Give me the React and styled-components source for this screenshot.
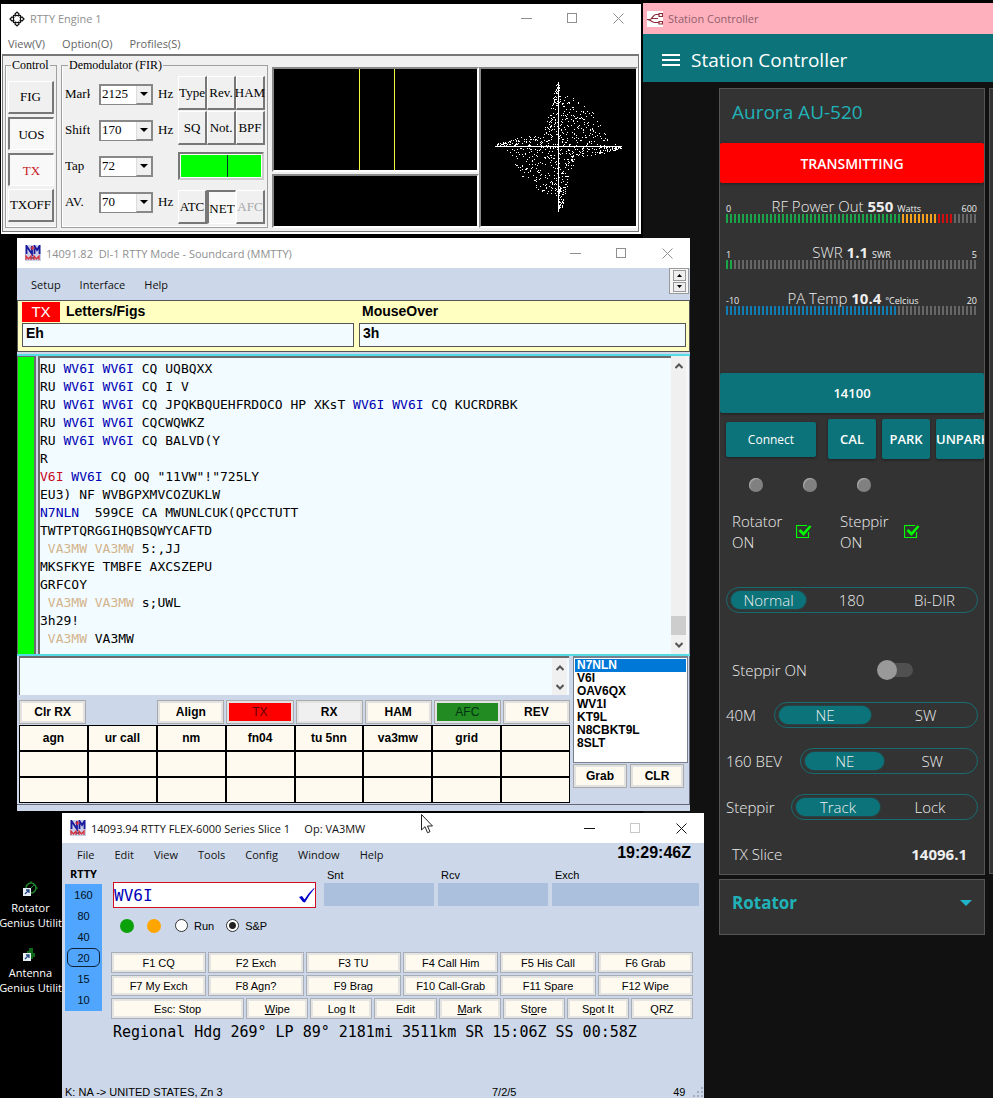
import React from "react";
import styled, { createGlobalStyle, css } from "styled-components";

const ui = `"Open Sans", "Noto Sans", sans-serif`;
const arial = `"Liberation Sans", Arial, sans-serif`;
const times = `"Liberation Serif", "Times New Roman", serif`;
const mono = `"DejaVu Sans Mono", "Liberation Mono", monospace`;

const GlobalStyle = createGlobalStyle`
  *, *::before, *::after { box-sizing: border-box; }
  body { margin: 0; background: #000; }
  button, input, select, textarea { font: inherit; color: inherit; margin: 0; padding: 0; border: 0; border-radius: 0; background: none; }
  fieldset { min-width: 0; margin: 0; }
`;

const Desktop = styled.main`
  position: relative;
  min-height: 100vh;
  overflow: hidden;
  background: #000;
  font-family: ${ui};
  font-size: 12px;
  color: #000;
`;

/* ---------- shared window chrome ---------- */

const Win = styled.section`
  position: absolute;
  left: ${(p) => p.$left}px;
  right: ${(p) => p.$right}px;
  top: ${(p) => p.$top}px;
  background: ${(p) => p.$bg};
  display: flex;
  flex-direction: column;
`;

const TitleBar = styled.header`
  display: flex;
  align-items: center;
  height: ${(p) => p.$h || 30}px;
  flex: none;
  padding-left: ${(p) => p.$pad || 8}px;
  gap: 5px;
  background: ${(p) => p.$bg || "#fff"};
  color: ${(p) => (p.$active ? "#111" : "#8f8f8f")};
  font-family: ${ui};
  font-size: 11px;
  white-space: pre;
`;

const TitleText = styled.span`
  flex: 1;
  min-width: 0;
`;

const CaptionGroup = styled.div`
  display: flex;
`;

const CaptionButton = styled.button`
  width: 46px;
  height: 28px;
  display: grid;
  place-items: center;
  color: ${(p) => (p.$dim ? "#c8c8c8" : "inherit")};
`;

const MenuBar = styled.nav`
  display: flex;
  flex: none;
  align-items: center;
  gap: ${(p) => p.$gap}px;
  height: ${(p) => p.$h}px;
  padding-left: ${(p) => p.$pad}px;
  color: ${(p) => p.$color || "#111"};
  font-size: 11px;
`;

const MenuItem = styled.button`
  white-space: nowrap;
`;

function Captions({ dimMax }) {
  return (
    <CaptionGroup>
      <CaptionButton aria-label="Minimize">
        <svg width="11" height="11"><path d="M0 5.5H11" stroke="currentColor" /></svg>
      </CaptionButton>
      <CaptionButton aria-label="Maximize" $dim={dimMax}>
        <svg width="11" height="11"><rect x=".5" y=".5" width="9" height="9" fill="none" stroke="currentColor" /></svg>
      </CaptionButton>
      <CaptionButton aria-label="Close">
        <svg width="11" height="11"><path d="M.5 .5l10 10M10.5 .5l-10 10" stroke="currentColor" /></svg>
      </CaptionButton>
    </CaptionGroup>
  );
}

function LoggerIcon() {
  return (
    <svg width="16" height="16" viewBox="0 0 16 16">
      <rect width="16" height="16" fill="#c9cfe6" />
      <path d="M1.5 9V1L7 9V1" fill="none" stroke="#1a1a9c" strokeWidth="1.8" />
      <path d="M9.5 9V1l2.5 4L14.5 1v8" fill="none" stroke="#1a1a9c" strokeWidth="1.8" />
      <path d="M5 3h5M7.5 1v4" stroke="#e0303a" strokeWidth="1.2" />
      <path d="M1 15v-4l2.500 3L6 11v4M9 15v-4l2.500 3 2.500-3v4" fill="none" stroke="#d8303a" strokeWidth="1.3" />
      <path d="M6 13h3" stroke="#8a3050" strokeWidth="1.5" />
    </svg>
  );
}

/* ---------- RTTY Engine ---------- */

const EngineBody = styled.div`
  display: flex;
  gap: 4px;
  margin: 0 2px 2px 1px;
  padding: 2px 0 3px 2px;
  border: 1px solid #777;
  border-top-width: 2px;
  background: #f0f0f0;
  font-family: ${times};
  font-size: 12px;
`;

const Group = styled.fieldset`
  border: 1px solid #a0a0a0;
  box-shadow: inset 1px -1px 0 #fff;
  padding: ${(p) => p.$pad};
  display: flex;
  height: 170px;
  legend {
    margin-left: 3px;
    padding: 0 1px;
    line-height: 14px;
    white-space: nowrap;
  }
`;

const ControlKeys = styled.div`
  display: grid;
  grid-template-rows: repeat(4, 33px);
  width: 46px;
  gap: 3px;
`;

const KeyRow = styled.div`
  display: grid;
  grid-template-columns: repeat(3, 29px);
  height: 34px;
`;

const Key = styled.button`
  min-width: 0;
  white-space: nowrap;
  font-size: 13px;
  display: flex;
  align-items: center;
  justify-content: center;
  border: 1px solid;
  border-color: #fff #777 #777 #fff;
  border-right-width: 2px;
  border-bottom-width: 2px;
  color: ${(p) => p.$color || "#000"};
  ${(p) => p.$down && css`
    background: #f8f8f8;
    border-color: #777 #fff #fff #777;
    border-width: 2px 1px 1px 2px;
    padding-top: 2px;
  `}
`;

const Params = styled.div`
  width: 113px;
  flex: none;
`;

const ParamRow = styled.div`
  display: grid;
  grid-template-columns: 34px 54px 1fr;
  align-items: center;
  height: 36px;
  label { overflow: hidden; width: 25px; font-size: 13px; white-space: nowrap; }
`;

const Combo = styled.span`
  position: relative;
  display: block;
  height: 21px;
  background: #fff;
  border: 1px solid #888;
  border-width: 2px 1px 1px 2px;
  select {
    display: block;
    appearance: none;
    width: 100%;
    height: 15px;
    padding-left: 1px;
    font-size: 13px;
    line-height: 15px;
  }
`;

const ComboArrow = styled.span`
  position: absolute;
  right: 0;
  top: 0;
  width: 16px;
  height: 18px;
  display: grid;
  place-items: center;
  background: #f0f0f0;
  border: 1px solid #888;
  border-top: 0;
  border-left-color: #ddd;
  pointer-events: none;
`;

const Unit = styled.span`
  padding-left: 5px;
  font-size: 13px;
`;

const KeyPad = styled.div`
  display: flex;
  flex-direction: column;
  gap: 1px;
`;

const LevelBox = styled.div`
  margin: 6px 1px 9px 0;
  height: 28px;
  padding: 1px;
  border: 2px solid;
  border-color: #777 #ccc #ccc #777;
  background: #fff;
`;

const Level = styled.div`
  height: 100%;
  background: linear-gradient(#033, #033) 58% 0 / 1px 100% no-repeat #0f0;
`;

const ScopeStack = styled.div`
  flex: 1;
  margin-top: 9px;
  display: flex;
  flex-direction: column;
  gap: 2px;
`;

const Scopes = styled.div`
  flex: 1;
  display: flex;
`;

const Scope = styled.div`
  flex: ${(p) => p.$flex};
  min-height: 0;
  min-width: 0;
  background: #000;
  border: 2px solid;
  border-color: #888 #fff #fff #888;
  svg { display: block; }
`;

const XYScope = styled(Scope)`
  flex: none;
  width: 159px;
  margin-top: 9px;
`;

const UPPER = [[0, 0], [0, -52], [14, -48], [34, -34], [45, -20], [50, -5], [62, 0]];
const NARROW = [[0, 0], [0, -64], [-6, -50], [-12, -26], [-17, -11], [-40, -9], [-64, -2]];

function inside(poly, x, y) {
  let hit = false;
  for (let i = 0, j = poly.length - 1; i < poly.length; j = i++) {
    const [xi, yi] = poly[i];
    const [xj, yj] = poly[j];
    if (yi > y !== yj > y && x < ((xj - xi) * (y - yi)) / (yj - yi) + xi) hit = !hit;
  }
  return hit;
}

function scatterPath() {
  let seed = 4217;
  const rnd = () => {
    seed = (seed * 1103515245 + 12345) % 2147483648;
    return seed / 2147483648;
  };
  const dot = (x, y) => `M${78 + Math.round(x)} ${77 + Math.round(y)}h1v1h-1z`;
  const out = [];
  [1, -1].forEach((s) => {
    const add = (poly, count) => {
      let n = 0;
      while (n < count) {
        const x = rnd() * 130 - 65;
        const y = -rnd() * 65;
        if (inside(poly, x, y)) {
          out.push(dot(s * x, s * y));
          n += 1;
        }
      }
    };
    add(UPPER, 185);
    add(NARROW, 130);
    for (let i = 0; i < 45; i++) {
      const t = 40 + rnd() * 22;
      out.push(dot(-s * t, -s * rnd() * 6 * (1.2 - (t - 40) / 30)));
      out.push(dot(-s * rnd() * 6 * (1.2 - (t - 40) / 30), -s * t));
    }
  });
  return out.join("");
}

const SCATTER = scatterPath();

const PARAMS = [
  ["Mark", "2125", "Hz"],
  ["Shift", "170", "Hz"],
  ["Tap", "72", ""],
  ["AV.", "70", "Hz"],
];

function Engine() {
  return (
    <Win $left={1} $right={352} $top={4} $bg="#fff" aria-label="RTTY Engine 1">
      <TitleBar $h={29}>
        <svg width="16" height="16" viewBox="0 0 16 16" fill="none" stroke="#111" strokeWidth="1.2">
          <rect x="4.5" y="4.5" width="7" height="7" />
          <path d="M5.500 3.500L8 1l2.500 2.500M5.500 12.500L8 15l2.500-2.500M3.500 5.500L1 8l2.500 2.500M12.500 5.500L15 8l-2.500 2.500M6.500 3.500v9M9.500 3.500v9M3.500 6.500h9M3.500 9.500h9" />
          <rect x="5.5" y="5.5" width="5" height="5" fill="#fff" stroke="none" />
        </svg>
        <TitleText>RTTY Engine 1</TitleText>
        <Captions />
      </TitleBar>
      <MenuBar $gap={17} $h={21} $pad={7} $color="#666">
        <MenuItem>View(V)</MenuItem>
        <MenuItem>Option(O)</MenuItem>
        <MenuItem>Profiles(S)</MenuItem>
      </MenuBar>
      <EngineBody>
        <Group $pad="9px 2px 3px">
          <legend>Control</legend>
          <ControlKeys>
            <Key>FIG</Key>
            <Key $down>UOS</Key>
            <Key $down $color="#c8141e">TX</Key>
            <Key>TXOFF</Key>
          </ControlKeys>
        </Group>
        <Group $pad="4px 2px 3px 3px">
          <legend>Demodulator (FIR)</legend>
          <Params>
            {PARAMS.map(([name, value, unit]) => (
              <ParamRow key={name}>
                <label htmlFor={"p-" + name}>{name}</label>
                <Combo>
                  <select id={"p-" + name} defaultValue={value}>
                    <option>{value}</option>
                  </select>
                  <ComboArrow>
                    <svg width="8" height="4"><path d="M0 0h8L4 4z" /></svg>
                  </ComboArrow>
                </Combo>
                <Unit>{unit}</Unit>
              </ParamRow>
            ))}
          </Params>
          <KeyPad>
            <KeyRow><Key>Type</Key><Key>Rev.</Key><Key>HAM</Key></KeyRow>
            <KeyRow><Key>SQ</Key><Key>Not.</Key><Key>BPF</Key></KeyRow>
            <LevelBox><Level /></LevelBox>
            <KeyRow><Key>ATC</Key><Key $down>NET</Key><Key $color="#a8a8a8">AFC</Key></KeyRow>
          </KeyPad>
        </Group>
        <Scopes>
          <ScopeStack>
            <Scope $flex="2 1 0">
              <svg width="100%" height="100%" shapeRendering="crispEdges">
                <rect x="42%" width="1" height="100%" fill="#f0f83c" />
                <rect x="59%" width="1" height="100%" fill="#f0f83c" />
              </svg>
            </Scope>
            <Scope $flex="1 1 0" />
          </ScopeStack>
          <XYScope>
            <svg width="155" height="156" viewBox="0 0 155 156" shapeRendering="crispEdges">
              <path d={SCATTER} fill="#fff" />
              <path d="M14 77h127v1H14zM77 13h1v130h-1z" fill="#fff" />
            </svg>
          </XYScope>
        </Scopes>
      </EngineBody>
    </Win>
  );
}

/* ---------- MMTTY decode window ---------- */

const PALE = "#f2fbff";
const FRAME = "#ccd8e9";
const CREAM = "#fefaf0";

const MenuStrip = styled.div`
  display: flex;
  justify-content: space-between;
  height: 32px;
  padding-right: 1px;
`;

const SpinBox = styled.div`
  display: flex;
  flex-direction: column;
  gap: 1px;
  width: 20px;
  height: 26px;
  padding: 1px 2px 1px 3px;
  background: #f6f6f6;
  border: 1px solid #9a9a9a;
  button {
    flex: 1;
    display: grid;
    place-items: center;
    border: 1px solid #999;
    background: #eee;
  }
`;

const FigsPanel = styled.div`
  display: grid;
  grid-template-columns: 332fr 327fr;
  column-gap: 5px;
  height: 52px;
  padding: 1px 3px 0 4px;
  border: 1px solid #555;
  background: #ffffc2;
  font-family: ${arial};
  font-size: 14px;
  font-weight: bold;
`;

const FigsField = styled.div`
  min-width: 0;
  label {
    display: inline-block;
    height: 20px;
    line-height: 18px;
    padding-left: ${(p) => (p.$flush ? 3 : 6)}px;
    vertical-align: top;
  }
  input {
    display: block;
    width: 100%;
    height: 24px;
    margin-top: 1px;
    padding: 0 3px 4px;
    border: 1px solid #555;
    background: ${PALE};
    font-weight: bold;
  }
`;

const TxFlag = styled.span`
  display: inline-block;
  width: 38px;
  height: 20px;
  line-height: 20px;
  background: #f00;
  color: #fff;
  font-size: 15px;
  font-weight: normal;
  text-align: center;
  vertical-align: top;
`;

const RxArea = styled.div`
  display: flex;
  height: 302px;
  margin-top: 2px;
  border-top: 2px solid #55dbe6;
  border-bottom: 2px solid #55dbe6;
`;

const TuneBar = styled.div`
  width: 19px;
  margin-right: 2px;
  background: #0f0;
  border: 1px solid #6b6b6b;
  border-width: 1px 2px 0 1px;
`;

const RxText = styled.pre`
  flex: 1;
  min-width: 0;
  margin: 0;
  padding: 2px 0 0;
  overflow: hidden;
  border: 1px solid #6b6b6b;
  border-width: 2px 0 0 2px;
  background: ${PALE};
  font-family: ${mono};
  font-size: 13px;
  line-height: 18px;
`;

const Call = styled.span`
  color: ${(p) => p.$c};
`;

const ScrollBar = styled.div`
  display: flex;
  flex-direction: column;
  width: 15px;
  flex: none;
  background: #f0f0f0;
  button { height: 19px; display: grid; place-items: center; flex: none; }
`;

const Thumb = styled.span`
  height: 19px;
  margin-top: auto;
  background: #cdcdcd;
`;

const RxEdge = styled.div`
  width: 4px;
  background: #f6f6f6;
  border-right: 1px solid #8792a5;
`;

const Bottom = styled.div`
  display: flex;
  gap: 3px;
  height: 149px;
  padding: 0 1px 0 2px;
  border-right: 1px solid #667;
  border-bottom: 1px solid #667;
`;

const SendSide = styled.div`
  flex: 1;
  min-width: 0;
`;

const SendBox = styled.div`
  display: flex;
  height: 39px;
  margin-right: 1px;
  padding-right: 2px;
  border: 1px solid #6b6b6b;
  border-width: 2px 0 0 1px;
  background: ${PALE};
  textarea { flex: 1; min-width: 0; resize: none; outline: 0; }
`;

const Mini = styled.button`
  border: 1px solid #aaa;
  outline: 2px solid #e2e2e2;
  outline-offset: -3px;
  height: 24px;
  background: ${(p) => p.$bg || CREAM};
  color: ${(p) => p.$color || "#000"};
  font-family: ${arial};
  font-size: 12px;
  font-weight: ${(p) => (p.$plain ? "normal" : "bold")};
  ${(p) => p.$wide && css`width: 54px;`}
`;

const ModeRow = styled.div`
  display: grid;
  grid-template-columns: repeat(8, 1fr);
  column-gap: 2px;
  padding-top: 5px;
  height: 30px;
`;

const MacroGrid = styled.div`
  display: grid;
  grid-template-columns: repeat(8, 1fr);
  grid-auto-rows: 24px;
  gap: 2px;
  padding: 1px;
  background: #000;
`;

const Macro = styled.button`
  padding-bottom: 1px;
  background: ${CREAM};
  font-family: ${arial};
  font-size: 12px;
  font-weight: bold;
`;

const ListSide = styled.div`
  width: 115px;
  flex: none;
`;

const CallList = styled.ul`
  list-style: none;
  height: 107px;
  margin: 0 0 1px;
  padding: 1px 1px 0;
  background: #fff;
  border: 1px solid #777f8c;
  border-top-width: 2px;
  font-family: ${arial};
  font-size: 12px;
  font-weight: bold;
  line-height: 13px;
`;

const CallItem = styled.li`
  padding-left: 2px;
  ${(p) => p.$on && css`background: #0078d7; color: #fff;`}
`;

const PairRow = styled.div`
  display: flex;
  gap: 3px;
`;

const WinFoot = styled.div`
  height: 6px;
`;

const Up = () => (
  <svg width="8" height="6"><path d="M.5 5L4 1.500 7.500 5" fill="none" stroke="#555" strokeWidth="2" /></svg>
);
const Down = () => (
  <svg width="8" height="6"><path d="M.5 1L4 4.500 7.500 1" fill="none" stroke="#555" strokeWidth="2" /></svg>
);

const B = ({ children }) => <Call $c="#0000b4">{children}</Call>;
const T = ({ children }) => <Call $c="#d2b48c">{children}</Call>;

const MODES = [
  { t: "Clr RX" },
  null,
  { t: "Align" },
  { t: "TX", bg: "#f00", color: "#600", plain: true },
  { t: "RX", bg: "#f0f0f0" },
  { t: "HAM" },
  { t: "AFC", bg: "#228b22", color: "#031", plain: true },
  { t: "REV" },
];
const MACROS = ["agn", "ur call", "nm", "fn04", "tu 5nn", "va3mw", "grid"].concat(Array(17).fill(""));
const CALLS = ["N7NLN", "V6I", "OAV6QX", "WV1I", "KT9L", "N8CBKT9L", "8SLT"];

function DecodeWindow() {
  return (
    <Win $left={17} $right={303} $top={238} $bg={FRAME} aria-label="RTTY decode">
      <TitleBar>
        <LoggerIcon />
        <TitleText>14091.82  DI-1 RTTY Mode - Soundcard (MMTTY)</TitleText>
        <Captions />
      </TitleBar>
      <MenuStrip>
        <MenuBar $gap={19} $h={32} $pad={14}>
          <MenuItem>Setup</MenuItem>
          <MenuItem>Interface</MenuItem>
          <MenuItem>Help</MenuItem>
        </MenuBar>
        <SpinBox>
          <button aria-label="Up"><svg width="5" height="3"><path d="M0 3h5L2.500 0z" /></svg></button>
          <button aria-label="Down"><svg width="5" height="3"><path d="M0 0h5L2.500 3z" /></svg></button>
        </SpinBox>
      </MenuStrip>
      <FigsPanel>
        <FigsField>
          <TxFlag>TX</TxFlag>
          <label htmlFor="figs">Letters/Figs</label>
          <input id="figs" defaultValue="Eh" />
        </FigsField>
        <FigsField $flush>
          <label htmlFor="over">MouseOver</label>
          <input id="over" defaultValue="3h" />
        </FigsField>
      </FigsPanel>
      <RxArea>
        <TuneBar />
        <RxText>
          RU <B>WV6I WV6I</B> CQ UQBQXX{"\n"}
          RU <B>WV6I WV6I</B> CQ I V{"\n"}
          RU <B>WV6I WV6I</B> CQ JPQKBQUEHFRDOCO HP XKsT <B>WV6I WV6I</B> CQ KUCRDRBK{"\n"}
          RU <B>WV6I WV6I</B> CQCWQWKZ{"\n"}
          RU <B>WV6I WV6I</B> CQ BALVD(Y{"\n"}
          R{"\n"}
          <Call $c="#c80a1e">V6I</Call> <B>WV6I</B> CQ OQ "11VW"!"725LY{"\n"}
          EU3) NF WVBGPXMVCOZUKLW{"\n"}
          <B>N7NLN</B>{"  "}599CE CA MWUNLCUK(QPCCTUTT{"\n"}
          TWTPTQRGGIHQBSQWYCAFTD{"\n"}
          {" "}<T>VA3MW VA3MW</T> 5:,JJ{"\n"}
          MKSFKYE TMBFE AXCSZEPU{"\n"}
          GRFCOY{"\n"}
          {" "}<T>VA3MW VA3MW</T> s;UWL{"\n"}
          3h29!{"\n"}
          {" "}<T>VA3MW</T> VA3MW
        </RxText>
        <ScrollBar>
          <button aria-label="Scroll up"><Up /></button>
          <Thumb />
          <button aria-label="Scroll down"><Down /></button>
        </ScrollBar>
        <RxEdge />
      </RxArea>
      <Bottom>
        <SendSide>
          <SendBox>
            <textarea aria-label="Transmit text" />
            <ScrollBar>
              <button aria-label="Scroll up"><Up /></button>
              <button aria-label="Scroll down"><Down /></button>
            </ScrollBar>
          </SendBox>
          <ModeRow>
            {MODES.map((m, i) =>
              m ? (
                <Mini key={i} $bg={m.bg} $color={m.color} $plain={m.plain}>{m.t}</Mini>
              ) : (
                <span key={i} />
              )
            )}
          </ModeRow>
          <MacroGrid>
            {MACROS.map((m, i) => (
              <Macro key={i} aria-label={m ? undefined : "Empty macro"}>{m}</Macro>
            ))}
          </MacroGrid>
        </SendSide>
        <ListSide>
          <CallList role="listbox" aria-label="Callsigns">
            {CALLS.map((c, i) => (
              <CallItem key={c} role="option" aria-selected={i === 0} $on={i === 0}>{c}</CallItem>
            ))}
          </CallList>
          <PairRow>
            <Mini $wide>Grab</Mini>
            <Mini $wide>CLR</Mini>
          </PairRow>
        </ListSide>
      </Bottom>
      <WinFoot />
    </Win>
  );
}

/* ---------- Entry window ---------- */

const EntryWin = styled(Win)`
  bottom: 0;
  min-height: 285px;
  font-family: ${arial};
  font-size: 11px;
`;

const EntryTop = styled.div`
  display: flex;
  justify-content: space-between;
  height: 23px;
  font-family: ${ui};
`;

const Clock = styled.time`
  padding-right: 13px;
  font-family: ${arial};
  font-size: 16px;
  font-weight: bold;
  line-height: 20px;
`;

const EntryMain = styled.div`
  display: flex;
  padding: 0 5px 0 3px;
`;

const Bands = styled.div`
  width: 37px;
  flex: none;
  text-align: center;
`;

const BandTitle = styled.div`
  height: 18px;
  line-height: 16px;
  font-family: ${ui};
  font-weight: bold;
`;

const BandList = styled.div`
  display: flex;
  flex-direction: column;
  height: 127px;
  padding: 1px 2px 0;
  background: #50a5ff;
`;

const Band = styled.button`
  height: 19px;
  margin-bottom: 2px;
  border: 1px solid ${(p) => (p.$on ? "#123" : "transparent")};
  border-radius: 6px;
  color: #012;
`;

const EntryPane = styled.div`
  flex: 1;
  min-width: 0;
  padding-left: 9px;
`;

const EntryFields = styled.div`
  display: grid;
  grid-template-columns: 207fr 110fr 110fr 147fr;
  column-gap: 4px;
  padding-left: 2px;
  height: 42px;
`;

const CallEntry = styled.div`
  position: relative;
  margin: 16px 4px 0 0;
  height: 26px;
  input {
    width: 100%;
    height: 100%;
    border: 1px solid #d01020;
    background: #fff;
    color: #0000b8;
    font-family: ${mono};
    font-size: 16px;
  }
  svg { position: absolute; right: 1px; top: 6px; }
`;

const Exchange = styled.div`
  label {
    display: block;
    height: 17px;
    line-height: 18px;
    padding-left: 3px;
  }
  input {
    display: block;
    width: 100%;
    height: 23px;
    background: #abc0dd;
  }
`;

const Lamps = styled.div`
  display: flex;
  align-items: center;
  height: 35px;
  padding-left: 9px;
`;

const Lamp = styled.span`
  width: 14px;
  height: 14px;
  margin-right: 13px;
  border-radius: 50%;
  background: ${(p) => p.$c};
`;

const Radio = styled.label`
  display: flex;
  align-items: center;
  gap: 6px;
  margin: 0 11px 0 1px;
  font-size: 11px;
  input {
    appearance: none;
    width: 13px;
    height: 13px;
    border: 1px solid #333;
    border-radius: 50%;
    background: #fff;
  }
  input:checked { background: radial-gradient(circle, #222 0 3px, #fff 4px); }
`;

const FKeys = styled.div`
  display: grid;
  grid-template-columns: repeat(6, 1fr);
  gap: 2px;
  margin: 9px 6px 2px 0;
`;

const FKey = styled.button`
  height: 21px;
  border: 1px solid #a9adb5;
  outline: 2px solid #e4e4e2;
  outline-offset: -3px;
  background: ${CREAM};
  font-size: 11px;
  white-space: nowrap;
`;

const Actions = styled(FKeys)`
  grid-template-columns: 133fr repeat(7, 62fr);
  margin-top: 0;
  margin-bottom: 0;
`;

const Heading = styled.p`
  margin: 0;
  padding: 1px 0 0 2px;
  font-family: ${mono};
  font-size: 15px;
  line-height: 25px;
  white-space: nowrap;
`;

const StatusBar = styled.footer`
  display: grid;
  grid-template-columns: 429fr 182fr 31fr;
  align-items: center;
  height: 12px;
  margin-top: auto;
  padding-left: 3px;
`;

const StatusEnd = styled.span`
  display: flex;
  justify-content: space-between;
  align-items: flex-end;
`;

const F_KEYS = ["F1 CQ", "F2 Exch", "F3 TU", "F4 Call Him", "F5 His Call", "F6 Grab",
  "F7 My Exch", "F8 Agn?", "F9 Brag", "F10 Call-Grab", "F11 Spare", "F12 Wipe"];
const ACTIONS = [["Esc: Stop", "", ""], ["", "W", "ipe"], ["Log It", "", ""], ["Edit", "", ""],
  ["", "M", "ark"], ["St", "o", "re"], ["S", "p", "ot It"], ["QRZ", "", ""]];

function EntryWindow() {
  return (
    <EntryWin $left={62} $right={289} $top={813} $bg={FRAME} aria-label="Entry window">
      <TitleBar $active>
        <LoggerIcon />
        <TitleText>14093.94 RTTY FLEX-6000 Series Slice 1     Op: VA3MW</TitleText>
        <Captions dimMax />
      </TitleBar>
      <EntryTop>
        <MenuBar $gap={20} $h={23} $pad={15}>
          {["File", "Edit", "View", "Tools", "Config", "Window", "Help"].map((m) => (
            <MenuItem key={m}>{m}</MenuItem>
          ))}
        </MenuBar>
        <Clock>19:29:46Z</Clock>
      </EntryTop>
      <EntryMain>
        <Bands>
          <BandTitle>RTTY</BandTitle>
          <BandList>
            {["160", "80", "40", "20", "15", "10"].map((b) => (
              <Band key={b} $on={b === "20"}>{b}</Band>
            ))}
          </BandList>
        </Bands>
        <EntryPane>
          <EntryFields>
            <CallEntry>
              <input aria-label="Callsign" defaultValue="WV6I" />
              <svg width="16" height="15" viewBox="0 0 16 15">
                <path d="M0 9L3 8 5.500 11.500Q9 5 15 0L15.500 .5Q10 7 6 14.500L4 14z" fill="#0000c8" />
              </svg>
            </CallEntry>
            {["Snt", "Rcv", "Exch"].map((f) => (
              <Exchange key={f}>
                <label htmlFor={"x-" + f}>{f}</label>
                <input id={"x-" + f} />
              </Exchange>
            ))}
          </EntryFields>
          <Lamps>
            <Lamp $c="#0ba10b" />
            <Lamp $c="#ffa500" />
            <Radio><input type="radio" name="mode" />Run</Radio>
            <Radio><input type="radio" name="mode" defaultChecked />S&amp;P</Radio>
          </Lamps>
          <FKeys>
            {F_KEYS.map((k) => (
              <FKey key={k}>{k}</FKey>
            ))}
          </FKeys>
          <Actions>
            {ACTIONS.map(([a, u, b]) => (
              <FKey key={a + u + b}>{a}{u && <u>{u}</u>}{b}</FKey>
            ))}
          </Actions>
          <Heading>Regional Hdg 269° LP 89° 2181mi 3511km SR 15:06Z SS 00:58Z</Heading>
        </EntryPane>
      </EntryMain>
      <StatusBar>
        <span>K: NA -&gt; UNITED STATES, Zn 3</span>
        <span>7/2/5</span>
        <StatusEnd>
          49
          <svg width="12" height="12" fill="#a8b0bc">
            <path d="M9 9h2v2H9zM5 9h2v2H5zM1 9h2v2H1zM9 5h2v2H9zM5 5h2v2H5zM9 1h2v2H9z" />
          </svg>
        </StatusEnd>
      </StatusBar>
    </EntryWin>
  );
}

/* ---------- Station Controller ---------- */

const Station = styled.section`
  position: absolute;
  top: 3px;
  right: 0;
  bottom: 0;
  width: 350px;
  overflow: hidden;
  background: #111;
  color: #eee;
`;

const AppBar = styled.header`
  display: flex;
  align-items: center;
  gap: 11px;
  height: 48px;
  padding: 4px 0 0 19px;
  background: #0b7379;
  color: #fff;
  h1 { margin: 0; font-size: 19px; font-weight: normal; white-space: nowrap; }
`;

const Columns = styled.div`
  display: flex;
  gap: 4px;
  padding: 6px 0 0 76px;
`;

const Column = styled.div`
  width: 266px;
  flex: none;
  display: flex;
  flex-direction: column;
  gap: 4px;
`;

const Card = styled.section`
  min-height: ${(p) => p.$min || 0}px;
  overflow: hidden;
  border: 1px solid #555;
  background: #333;
  font-size: 15px;
  font-weight: 300;
`;

const CardTitle = styled.h2`
  display: flex;
  justify-content: space-between;
  align-items: center;
  height: 54px;
  margin: 0;
  padding: 0 12px 8px;
  color: #20b2b8;
  font-size: ${(p) => p.$size}px;
  font-weight: ${(p) => p.$weight};
  line-height: 24px;
`;

const Banner = styled.button`
  display: block;
  width: 100%;
  height: 40px;
  border-radius: 2px;
  background: ${(p) => p.$bg};
  box-shadow: 0 1px 3px #0006;
  color: #fff;
  font-size: ${(p) => p.$size}px;
  font-weight: 600;
`;

const Gauges = styled.div`
  height: 190px;
  padding: 13px 7px 0 6px;
`;

const Gauge = styled.div`
  height: 46px;
`;

const GaugeHead = styled.div`
  display: flex;
  justify-content: space-between;
  align-items: baseline;
  height: 18px;
  line-height: 20px;
  font-size: 15px;
  white-space: nowrap;
  small { font-size: 9px; font-weight: 400; }
  b { font-weight: 700; font-size: 15px; }
`;

const Ticks = styled.div`
  height: 9px;
  background:
    repeating-linear-gradient(90deg, transparent 0 2px, #333 2px 4px),
    linear-gradient(90deg, ${(p) => p.$stops}, #666 0);
`;

const Pads = styled.div`
  display: flex;
  align-items: center;
  gap: 6px;
  height: 52px;
  padding-left: 6px;
`;

const Pad = styled.button`
  flex: none;
  width: ${(p) => (p.$wide ? 90 : 48)}px;
  height: ${(p) => (p.$wide ? 35 : 40)}px;
  margin-right: ${(p) => (p.$wide ? 6 : 0)}px;
  border-radius: 2px;
  background: #0b7379;
  box-shadow: 0 1px 3px #0006;
  color: #fff;
  overflow: hidden;
  font-size: ${(p) => (p.$wide ? 12 : 13)}px;
  font-weight: ${(p) => (p.$wide ? 400 : 600)};
`;

const Leds = styled.div`
  display: flex;
  gap: 40px;
  height: 44px;
  align-items: center;
  padding: 0 0 4px 29px;
`;

const Led = styled.span`
  width: 14px;
  height: 14px;
  border-radius: 50%;
  background: #808080;
  box-shadow: inset 1px 1px 1px #aaa;
`;

const Checks = styled.div`
  display: grid;
  grid-template-columns: 108px 108px;
  height: 68px;
  padding: 2px 0 0 12px;
`;

const Check = styled.label`
  display: grid;
  grid-template-columns: 64px 16px;
  height: 42px;
  align-items: center;
  line-height: 21px;
`;

const Tick = styled.span`
  position: relative;
  height: 16px;
  input { appearance: none; position: absolute; inset: 0; }
  svg { display: block; }
`;

const SegRow = styled.div`
  display: flex;
  align-items: center;
  gap: 10px;
  height: 46px;
  padding: 0 6px;
  white-space: nowrap;
`;

const Segments = styled.div`
  flex: none;
  width: ${(p) => p.$w}px;
  margin-left: auto;
  display: grid;
  grid-template-columns: 20fr repeat(${(p) => p.$n - 1}, 21fr);
  height: 26px;
  padding: 3px 1px 3px 4px;
  border: 1px solid #176c70;
  border-radius: 13px;
`;

const Segment = styled.label`
  position: relative;
  display: grid;
  place-items: center;
  border-radius: 9px;
  line-height: 18px;
  ${(p) => p.$on && css`
    margin-right: 4px;
    background: #0b7379;
    box-shadow: 0 0 2px #0b7379;
  `}
  input { appearance: none; position: absolute; inset: 0; }
`;

const SegGap = styled.div`
  padding-bottom: 25px;
`;

const Line = styled.label`
  display: flex;
  justify-content: space-between;
  align-items: center;
  height: 44px;
  padding: ${(p) => p.$drop || 0}px ${(p) => p.$right}px 0 12px;
  output { font-weight: 700; }
`;

const Toggle = styled.input`
  && {
    appearance: none;
    position: relative;
    width: 26px;
    height: 14px;
    border-radius: 7px;
    background: #505050;
  }
  &::before {
    content: "";
    position: absolute;
    left: -10px;
    top: -3px;
    width: 20px;
    height: 20px;
    border-radius: 50%;
    background: #999;
  }
`;

const BrandName = styled.span`
  color: #8f5f6c;
`;

function BrandMark() {
  return (
    <svg width="16" height="16" viewBox="0 0 16 16" fill="none" stroke="#8f2f3a" strokeWidth="1.2">
      <rect width="16" height="16" fill="#fff" stroke="none" />
      <path d="M0 8.500h3C5 8.500 6 3.500 9 3.500h3M0 8.500C4 8.500 5 11.500 8 11.500h4M4 7.500h7" />
      <path d="M12 2.500h3.500v3H12zM12 10.500h3.500v2.500H12z" />
    </svg>
  );
}

function Meter({ min, max, name, value, unit, stops }) {
  return (
    <Gauge>
      <GaugeHead>
        <small>{min}</small>
        <span>{name} <b>{value}</b> <small>{unit}</small></span>
        <small>{max}</small>
      </GaugeHead>
      <Ticks $stops={stops} role="meter" aria-label={name} aria-valuemin={min} aria-valuemax={max} aria-valuenow={value} />
    </Gauge>
  );
}

function Choice({ label, name, options, width }) {
  return (
    <SegRow role="radiogroup" aria-label={label || name}>
      {label && <span>{label}</span>}
      <Segments $n={options.length} $w={width}>
        {options.map((o, i) => (
          <Segment key={o} $on={i === 0}>
            <input type="radio" name={name} defaultChecked={i === 0} />
            {o}
          </Segment>
        ))}
      </Segments>
    </SegRow>
  );
}

function CheckItem({ label }) {
  return (
    <Check>
      <span>{label}<br />ON</span>
      <Tick>
        <input type="checkbox" defaultChecked />
        <svg width="16" height="15" viewBox="0 0 16 15" fill="none" stroke="#0f0">
          <path d="M12.500 8v5.500h-12v-12H11" strokeWidth="1.2" />
          <path d="M3.500 6l4 4L14.500 2" strokeWidth="2.6" />
        </svg>
      </Tick>
    </Check>
  );
}

function StationWindow() {
  return (
    <Station aria-label="Station Controller">
      <TitleBar $bg="#ffb0bd" $h={31} $pad={4}>
        <BrandMark />
        <BrandName>Station Controller</BrandName>
      </TitleBar>
      <AppBar>
        <svg width="18" height="13" fill="#fff"><path d="M0 0h18v2H0zM0 5h18v2H0zM0 10h18v2H0z" /></svg>
        <h1>Station Controller</h1>
      </AppBar>
      <Columns>
        <Column>
          <Card $min={786}>
            <CardTitle $size={19} $weight={400}><span>Aurora AU-520</span></CardTitle>
            <Banner $bg="#f00" $size={14}>TRANSMITTING</Banner>
            <Gauges>
              <Meter min="0" max="600" name="RF Power Out" value="550" unit="Watts"
                stops="#1aa548 0 176px, #f5a020 0 210px, #d01010 0 227px" />
              <Meter min="1" max="5" name="SWR" value="1.1" unit="SWR" stops="#1aa548 0 6px" />
              <Meter min="-10" max="20" name="PA Temp" value="10.4" unit="°Celcius" stops="#107cb4 0 171px" />
            </Gauges>
            <Banner $bg="#0b7379" $size={13}>14100</Banner>
            <Pads>
              <Pad $wide>Connect</Pad>
              <Pad>CAL</Pad>
              <Pad>PARK</Pad>
              <Pad>UNPARK</Pad>
            </Pads>
            <Leds><Led /><Led /><Led /></Leds>
            <Checks>
              <CheckItem label="Rotator" />
              <CheckItem label="Steppir" />
            </Checks>
            <SegGap>
              <Choice name="Direction" options={["Normal", "180", "Bi-DIR"]} width={252} />
            </SegGap>
            <Line $right={71}>Steppir ON<Toggle type="checkbox" role="switch" /></Line>
            <Choice label="40M" name="m40" options={["NE", "SW"]} width={204} />
            <Choice label="160 BEV" name="bev" options={["NE", "SW"]} width={178} />
            <Choice label="Steppir" name="steppir" options={["Track", "Lock"]} width={187} />
            <Line $right={17} $drop={4}>TX Slice<output>14096.1</output></Line>
          </Card>
          <Card>
            <CardTitle $size={17} $weight={700}>
              <span>Rotator</span>
              <svg width="12" height="6"><path d="M0 0h12L6 6z" fill="#20b2c8" /></svg>
            </CardTitle>
          </Card>
        </Column>
        <Column><Card $min={786} /></Column>
      </Columns>
    </Station>
  );
}

/* ---------- desktop shortcuts and pointer ---------- */

const Shortcuts = styled.div`
  position: absolute;
  left: -12px;
  top: 880px;
  width: 85px;
  display: grid;
  grid-auto-rows: 65px;
`;

const Shortcut = styled.a`
  display: flex;
  flex-direction: column;
  align-items: center;
  color: #fff;
  font-size: 11px;
  line-height: 15px;
  text-align: center;
  text-decoration: none;
  white-space: nowrap;
  svg { margin-bottom: 2px; }
`;

const Pointer = styled.svg`
  position: absolute;
  left: 421px;
  top: 814px;
`;

function ShortcutArrow() {
  return (
    <>
      <rect x="0" y="8" width="8" height="8" fill="#e8eef5" />
      <path d="M2 14l4-4M3 10h3v3" fill="none" stroke="#234a80" strokeWidth="1.3" />
    </>
  );
}

export default function App() {
  return (
    <Desktop>
      <GlobalStyle />
      <StationWindow />
      <Shortcuts>
        <Shortcut href="#rotator">
          <svg width="16" height="18" viewBox="0 0 16 18">
            <circle cx="8" cy="8" r="5" fill="none" stroke="#1d8a2c" strokeWidth="1.5" />
            <path d="M4 12l8-8M8 1v2M15 8h-2" stroke="#1d8a2c" />
            <ShortcutArrow />
          </svg>
          Rotator<br />Genius Utilit
        </Shortcut>
        <Shortcut href="#antenna">
          <svg width="16" height="18" viewBox="0 0 16 18">
            <path d="M5 9V6M7 12V3M9 14V3M11 12V8" stroke="#148a20" strokeWidth="1.5" />
            <ShortcutArrow />
          </svg>
          Antenna<br />Genius Utilit
        </Shortcut>
      </Shortcuts>
      <Engine />
      <DecodeWindow />
      <EntryWindow />
      <Pointer width="13" height="20" viewBox="0 0 13 20">
        <path d="M.5 .5v15.500l3.500-3.300 2.500 6 2.500-1-2.500-5.700h5z" fill="#fff" stroke="#222" />
      </Pointer>
    </Desktop>
  );
}
